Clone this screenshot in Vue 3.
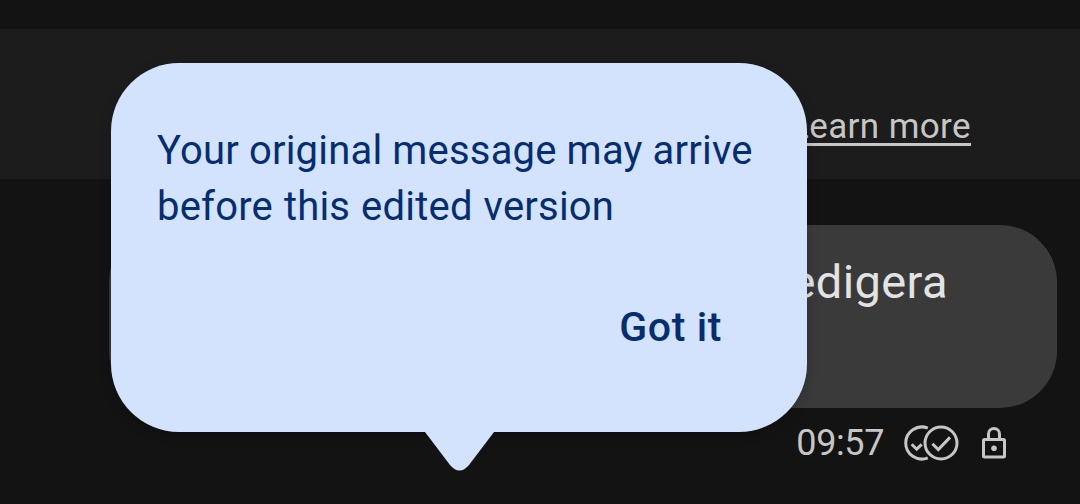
<script setup>
const lines = [
  'Your original message may arrive',
  'before this edited version',
]
</script>

<template>
  <div class="screen">
    <div class="banner">
      <a class="learn-more">Learn more</a>
    </div>
    <div class="message">
      <div class="bubble">Redigera</div>
      <div class="status">
        <span class="time">09:57</span>
        <svg class="checks" width="56" height="36" viewBox="0 0 56 36">
          <path d="M24.8 3.2A16 16 0 1 0 24.8 32.8" />
          <path d="M8.7 19.2L13.7 24.2L18.7 19.4" />
          <circle cx="38" cy="18" r="16" />
          <path d="M29.4 18.8L35.3 24.6L47 12.4" />
        </svg>
        <svg class="lock" width="24" height="32" viewBox="0 0 24 32">
          <rect x="1.5" y="12.5" width="21" height="17.5" rx="1" />
          <path d="M6.5 12.5V7A5.5 5.5 0 0 1 17.5 7V12.5" />
          <circle class="dot" cx="12" cy="21.2" r="2.8" />
        </svg>
      </div>
    </div>

    <div class="tooltip">
      <p class="text">
        <span v-for="(line, i) in lines" :key="i" :class="'line line-' + i">{{ line }}</span>
      </p>
      <button class="action">Got it</button>
      <svg class="tail" width="70" height="41" viewBox="0 0 70 41">
        <path d="M0 0V1L25 34Q34.5 45 44 34L69 1V0Z" />
      </svg>
    </div>
  </div>
</template>

<style>
body {
  margin: 0;
  background: #131313;
}
</style>

<style scoped>
.screen {
  position: relative;
  width: 1080px;
  height: 504px;
  overflow: hidden;
  box-sizing: border-box;
  padding-top: 29px;
  background: #131313;
  font-family: Roboto, "Liberation Sans", sans-serif;
}
.banner {
  display: flex;
  justify-content: flex-end;
  height: 150px;
  box-sizing: border-box;
  padding: 76px 109px 0 0;
  background: #1c1c1c;
}
.learn-more {
  height: 38px;
  line-height: 44px;
  border-bottom: 3px solid #c6c6c6;
  color: #c6c6c6;
  font-size: 35px;
  letter-spacing: 0.4px;
  white-space: nowrap;
}
.message {
  margin: 46px 23px 0 109px;
}
.bubble {
  height: 183px;
  box-sizing: border-box;
  padding: 29px 109px 0 0;
  border-radius: 57px;
  background: #3a3a3a;
  color: #e3e3e3;
  font-size: 47px;
  letter-spacing: 0.4px;
  line-height: 56px;
  text-align: right;
}
.status {
  display: flex;
  align-items: center;
  justify-content: flex-end;
  height: 70px;
  padding-right: 51.5px;
  color: #c6c6c6;
}
.time {
  font-size: 36px;
  letter-spacing: -0.4px;
  margin-right: 19px;
}
.checks,
.lock {
  fill: none;
  stroke: #c6c6c6;
  stroke-width: 3;
}
.checks {
  margin-right: 22.5px;
}
.lock .dot {
  fill: #c6c6c6;
  stroke: none;
}
.tooltip {
  position: absolute;
  left: 111px;
  top: 62.5px;
  width: 696px;
  height: 369px;
  box-sizing: border-box;
  padding: 60.5px 46px 0;
  border-radius: 68px;
  background: #d3e3fd;
  color: #062e6f;
  box-shadow: 0 3px 12px rgba(0, 0, 0, 0.2);
}
.text {
  margin: 0;
  font-size: 40px;
  line-height: 56px;
}
.line {
  display: block;
  white-space: nowrap;
}
.line-0 {
  letter-spacing: 0.2px;
  word-spacing: -0.2px;
}
.line-1 {
  letter-spacing: 0.2px;
  word-spacing: 0.8px;
}
.action {
  display: block;
  margin: 64px 39px 0 auto;
  padding: 0;
  border: 0;
  background: none;
  color: inherit;
  font: 500 41px/56px Roboto, "Liberation Sans", sans-serif;
  letter-spacing: 0.6px;
}
.tail {
  position: absolute;
  left: 314px;
  top: 368px;
  fill: #d3e3fd;
}
</style>
